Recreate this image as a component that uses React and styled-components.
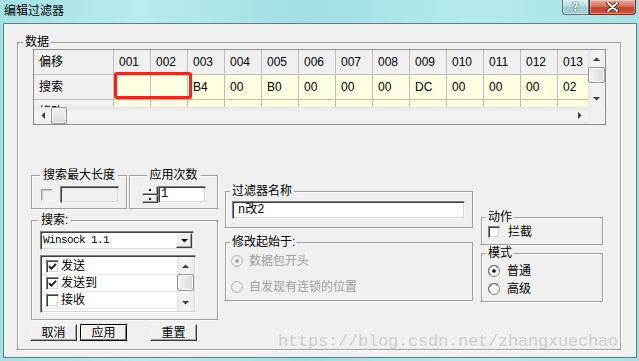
import React from 'react';
import styled, { createGlobalStyle } from 'styled-components';

const UI = `"Liberation Sans", "Noto Sans CJK SC", sans-serif`;
const MONO = `"Liberation Mono", "Noto Sans CJK SC", monospace`;

const GlobalStyle = createGlobalStyle`
  *, *::before, *::after { box-sizing: border-box; }
  html, body { margin: 0; padding: 0; background: #a6e3e6; }
  body { font-family: ${UI}; font-size: 12px; color: #000; }
`;

const Window = styled.div`
  width: 639px;
  height: 361px;
  display: flex;
  flex-direction: column;
  overflow: hidden;
  background: linear-gradient(90deg, #a4e1e4 0%, #b8ecef 22%, #a0dfe2 48%, #b4ebee 74%, #a6e2e5 100%);
`;

const TitleBar = styled.div`
  height: 23px;
  flex-shrink: 0;
  display: flex;
  align-items: flex-start;
`;

const Title = styled.div`
  padding: 4px 0 0 4px;
  font-size: 12px;
  line-height: 14px;
`;

const CapButtons = styled.div`
  margin-left: auto;
  margin-right: 3px;
  display: flex;
`;

const CapButton = styled.div`
  width: ${p => p.$w}px;
  height: 15px;
  display: flex;
  align-items: center;
  justify-content: center;
  border: 1px solid ${p => (p.$close ? '#6b2b21' : '#55777c')};
  border-top: none;
  border-radius: ${p => (p.$close ? '0 0 4px 0' : '0 0 0 4px')};
  background: ${p =>
    p.$close
      ? 'linear-gradient(180deg, #e9a99c 0%, #d8725f 45%, #c3402c 55%, #cb5a44 100%)'
      : 'linear-gradient(180deg, #d3ecef 0%, #b5d9dd 45%, #9cc8cd 55%, #a9d2d6 100%)'};
  box-shadow: inset 0 0 0 1px rgba(255, 255, 255, 0.35);
  color: #fff;
  font-family: "DejaVu Sans", sans-serif;
  font-weight: bold;
  font-size: 12px;
  line-height: 12px;
  text-shadow: 0 0 1px #2c4548, 0 0 1px #2c4548;
`;

const Frame = styled.div`
  flex: 1;
  min-height: 0;
  display: flex;
  padding: 0 2px 3px 3px;
`;

const Client = styled.div`
  flex: 1;
  position: relative;
  display: flex;
  background: #f0f0f0;
  border: 1px solid #607f82;
  padding: 18px 15px 7px 13px;
`;

const Group = styled.div`
  position: relative;
  flex-shrink: 0;
  border: 1px solid #a0a0a0;
  box-shadow: 1px 1px 0 #fff, inset 1px 1px 0 #fff;
  width: ${p => (p.$w ? `${p.$w}px` : 'auto')};
  height: ${p => (p.$h ? `${p.$h}px` : 'auto')};
  margin-top: ${p => p.$mt || 0}px;
  padding: ${p => p.$pad || '0'};
`;

const DataGroup = styled(Group)`
  flex: 1;
`;

const Caption = styled.span`
  position: absolute;
  top: -8px;
  left: ${p => (p.$center ? '50%' : `${p.$left}px`)};
  transform: ${p => (p.$center ? 'translateX(-50%)' : 'none')};
  padding: 0 ${p => p.$pad || 2}px;
  background: #f0f0f0;
  font-size: 12px;
  line-height: 14px;
  white-space: nowrap;
`;

/* ---------- grid ---------- */

const GridFrame = styled.div`
  position: relative;
  width: 573px;
  height: 76px;
  margin-left: 2px;
  border: 1px solid #8e8f8f;
  display: flex;
  flex-direction: column;
  background: #fff;
`;

const GridTop = styled.div`
  flex: 1;
  min-height: 0;
  display: flex;
`;

const Table = styled.div`
  flex: 1;
  overflow: hidden;
`;

const Row = styled.div`
  display: flex;
`;

const Cell = styled.div`
  flex: 0 0 ${p => p.$w}px;
  height: 25px;
  border-right: 1px solid #bdbdbd;
  border-bottom: 1px solid #bdbdbd;
  background: ${p => (p.$head ? '#f0f0f0' : '#ffffe1')};
  padding-left: 5px;
  font-size: 12px;
  line-height: 24px;
  white-space: nowrap;
  overflow: hidden;
`;

const Highlight = styled.div`
  position: absolute;
  left: 80px;
  top: 22px;
  width: 78px;
  height: 27px;
  border: 3px solid #fb2117;
  border-radius: 3px;
  pointer-events: none;
`;

const VBar = styled.div`
  flex: 0 0 17px;
  display: flex;
  flex-direction: column;
  background: linear-gradient(90deg, #e6e6e6 0%, #f3f3f3 30%, #f3f3f3 70%, #ebebeb 100%);
`;

const HBar = styled.div`
  flex: 0 0 17px;
  display: flex;
  background: linear-gradient(180deg, #e6e6e6 0%, #f3f3f3 30%, #f3f3f3 70%, #ebebeb 100%);
`;

const Arrow = styled.div`
  flex: 0 0 17px;
  display: flex;
  align-items: center;
  justify-content: center;
`;

const Track = styled.div`
  flex: 1;
`;

const Thumb = styled.div`
  flex: 0 0 ${p => p.$len}px;
  border: 1px solid #979797;
  border-radius: 2px;
  background: ${p =>
    p.$horizontal
      ? 'linear-gradient(180deg, #f6f6f6 0%, #e6e6e6 50%, #d9d9d9 100%)'
      : 'linear-gradient(90deg, #f6f6f6 0%, #e6e6e6 50%, #d9d9d9 100%)'};
  box-shadow: inset 0 0 0 1px #fdfdfd;
`;

const Corner = styled.div`
  flex: 0 0 17px;
  background: #f0f0f0;
`;

/* ---------- lower controls ---------- */

const Lower = styled.div`
  display: flex;
  align-items: flex-start;
`;

const Column = styled.div`
  flex: 0 0 ${p => p.$w}px;
  display: flex;
  flex-direction: column;
  margin-top: ${p => p.$top}px;
  margin-left: ${p => p.$ml || 0}px;
`;

const PairRow = styled.div`
  display: flex;
  gap: 2px;
`;

const InlineRow = styled.div`
  display: flex;
  align-items: center;
  gap: ${p => p.$gap || 0}px;
`;

const Field = styled.div`
  width: ${p => p.$w}px;
  height: ${p => p.$h || 17}px;
  flex-shrink: 0;
  border: 1px solid;
  border-color: #808080 #fff #fff #808080;
  box-shadow: inset 1px 1px 0 #404040, inset -1px -1px 0 #d8d8d8;
  background: ${p => (p.$disabled ? '#f0f0f0' : '#fff')};
  padding-left: ${p => p.$pl || 2}px;
  font-family: ${MONO};
  font-size: 12px;
  line-height: ${p => (p.$h || 17) - 2}px;
  white-space: nowrap;
`;

const Spin = styled.div`
  width: 16px;
  height: 17px;
  display: flex;
  flex-direction: column;
  flex-shrink: 0;
`;

const SpinHalf = styled.div`
  flex: 1;
  display: flex;
  align-items: center;
  justify-content: center;
  background: #f0f0f0;
  border: 1px solid;
  border-color: #fff #404040 #404040 #fff;
  box-shadow: inset -1px -1px 0 #a0a0a0;
`;

const SpinDot = styled.span`
  width: 2px;
  height: 2px;
  background: #000;
`;

const CheckBox = styled.span`
  width: ${p => p.$size || 12}px;
  height: ${p => p.$size || 12}px;
  flex-shrink: 0;
  display: inline-flex;
  align-items: center;
  justify-content: center;
  border: 1px solid;
  border-color: ${p => (p.$disabled ? '#a0a0a0 #fff #fff #a0a0a0' : '#808080 #fff #fff #808080')};
  box-shadow: ${p => (p.$disabled ? 'inset 1px 1px 0 #c8c8c8' : 'inset 1px 1px 0 #404040, inset -1px -1px 0 #d8d8d8')};
  background: ${p => (p.$disabled ? '#f0f0f0' : '#fff')};
`;

const Combo = styled.div`
  width: 154px;
  height: 19px;
  display: flex;
  padding: 1px;
  border: 1px solid;
  border-color: #808080 #fff #fff #808080;
  box-shadow: inset 1px 1px 0 #404040, inset -1px -1px 0 #d8d8d8;
  background: #fff;
`;

const ComboText = styled.div`
  flex: 1;
  padding-left: 1px;
  font-family: ${MONO};
  font-size: 11px;
  letter-spacing: -0.6px;
  line-height: 15px;
`;

const ComboButton = styled.div`
  flex: 0 0 16px;
  display: flex;
  align-items: center;
  justify-content: center;
  background: #f0f0f0;
  border: 1px solid;
  border-color: #fff #404040 #404040 #fff;
  box-shadow: inset -1px -1px 0 #a0a0a0;
`;

const ListBox = styled.div`
  width: 156px;
  height: 58px;
  margin-top: 5px;
  display: flex;
  border: 1px solid;
  border-color: #808080 #fff #fff #808080;
  box-shadow: inset 1px 1px 0 #404040, inset -1px -1px 0 #d8d8d8;
  background: #fff;
  padding: 1px;
`;

const ListItems = styled.div`
  flex: 1;
  padding-top: 1px;
`;

const ListItem = styled.div`
  height: 17px;
  display: flex;
  align-items: center;
  gap: 2px;
  padding-left: 4px;
  border-bottom: 1px solid #ececec;
  font-size: 12px;
  line-height: 14px;
`;

const ButtonRow = styled.div`
  display: flex;
  margin: 4px 0 0 -1px;
`;

const Button = styled.div`
  width: 47px;
  height: 17px;
  margin-left: ${p => p.$ml || 0}px;
  display: flex;
  align-items: center;
  justify-content: center;
  background: #f0f0f0;
  border: 1px solid;
  border-color: ${p => (p.$default ? '#000' : '#fff #404040 #404040 #fff')};
  box-shadow: ${p =>
    p.$default ? 'inset 1px 1px 0 #fff, inset -1px -1px 0 #808080' : 'inset -1px -1px 0 #a0a0a0'};
  font-size: 12px;
  line-height: 14px;
`;

const OptionRow = styled.div`
  height: ${p => p.$h || 14}px;
  margin-bottom: ${p => p.$mb || 0}px;
  display: flex;
  align-items: center;
  gap: ${p => p.$gap || 6}px;
  font-size: 12px;
  line-height: 14px;
  color: ${p => (p.$disabled ? '#a0a0a0' : '#000')};
`;

const Watermark = styled.div`
  position: absolute;
  left: 274px;
  top: 309px;
  font-family: "Liberation Mono", monospace;
  font-size: 17px;
  line-height: 17px;
  letter-spacing: -0.2px;
  color: #cfcfcf;
  white-space: nowrap;
  pointer-events: none;
`;

/* ---------- small drawings ---------- */

const Tri = ({ dir, color = '#3c3c3c' }) => {
  const vertical = dir === 'up' || dir === 'down';
  const pts = {
    up: '0,4 3.5,0.5 7,4',
    down: '0,0 7,0 3.5,3.5',
    left: '4,0 4,7 0.5,3.5',
    right: '0,0 0,7 3.5,3.5',
  };
  return (
    <svg width={vertical ? 7 : 4} height={vertical ? 4 : 7} viewBox={vertical ? '0 0 7 4' : '0 0 4 7'}>
      <polygon points={pts[dir]} fill={color} />
    </svg>
  );
};

const Tick = () => (
  <svg width="9" height="9" viewBox="0 0 9 9">
    <path d="M1 4.2 L3.3 6.6 L8 1.8" fill="none" stroke="#111" strokeWidth="1.8" />
  </svg>
);

const Radio = ({ checked, disabled }) => (
  <svg width="12" height="12" viewBox="0 0 12 12" style={{ flexShrink: 0 }}>
    <circle cx="6" cy="6" r="5.5" fill={disabled ? '#f0f0f0' : '#fff'} stroke={disabled ? '#b4b4b4' : '#8a8a8a'} />
    <path d="M2.2 9.8 A5 5 0 0 1 9.8 2.2" fill="none" stroke={disabled ? '#c8c8c8' : '#5a5a5a'} strokeWidth="0.8" />
    {checked && <circle cx="6" cy="6" r="1.8" fill={disabled ? '#9a9a9a' : '#000'} />}
  </svg>
);

const CloseGlyph = () => (
  <svg width="13" height="10" viewBox="0 0 13 10">
    <path d="M2 1 L11 9 M11 1 L2 9" stroke="#5b1c12" strokeWidth="4" strokeLinecap="round" />
    <path d="M2 1 L11 9 M11 1 L2 9" stroke="#fff" strokeWidth="2.2" strokeLinecap="round" />
  </svg>
);

/* ---------- data ---------- */

const columns = ['001', '002', '003', '004', '005', '006', '007', '008', '009', '010', '011', '012', '013'];
const searchRow = ['', '', 'B4', '00', 'B0', '00', '00', '00', 'DC', '00', '00', '00', '02'];
const listItems = [
  { label: '发送', checked: true },
  { label: '发送到', checked: true },
  { label: '接收', checked: false },
];

const GridRow = ({ label, values, head }) => (
  <Row>
    <Cell $w={80} $head>{label}</Cell>
    {values.map((v, i) => (
      <Cell key={i} $w={37} $head={head}>{v}</Cell>
    ))}
  </Row>
);

export default function App() {
  return (
    <>
      <GlobalStyle />
      <Window>
        <TitleBar>
          <Title>编辑过滤器</Title>
          <CapButtons>
            <CapButton $w={27}>?</CapButton>
            <CapButton $w={47} $close><CloseGlyph /></CapButton>
          </CapButtons>
        </TitleBar>

        <Frame>
          <Client>
            <DataGroup $pad="6px 0 0 13px">
              <Caption $left={5}>数据</Caption>

              <GridFrame>
                <GridTop>
                  <Table>
                    <GridRow label="偏移" values={columns} head />
                    <GridRow label="搜索" values={searchRow} />
                    <GridRow label="修改" values={columns.map(() => '')} />
                  </Table>
                  <VBar>
                    <Arrow><Tri dir="up" /></Arrow>
                    <Thumb $len={16} />
                    <Track />
                    <Arrow><Tri dir="down" /></Arrow>
                  </VBar>
                </GridTop>
                <HBar>
                  <Arrow><Tri dir="left" /></Arrow>
                  <Thumb $len={16} $horizontal />
                  <Track />
                  <Arrow><Tri dir="right" /></Arrow>
                  <Corner />
                </HBar>
                <Highlight />
              </GridFrame>

              <Lower>
                <Column $w={187} $top={50}>
                  <PairRow>
                    <Group $w={96} $h={34} $pad="10px 0 0 9px">
                      <Caption $center $pad={3}>搜索最大长度</Caption>
                      <InlineRow $gap={7}>
                        <CheckBox $disabled />
                        <Field $w={59} $disabled />
                      </InlineRow>
                    </Group>
                    <Group $w={89} $h={34} $pad="10px 0 0 12px">
                      <Caption $center $pad={3}>应用次数</Caption>
                      <InlineRow>
                        <Spin>
                          <SpinHalf><SpinDot /></SpinHalf>
                          <SpinHalf><SpinDot /></SpinHalf>
                        </Spin>
                        <Field $w={48}>1</Field>
                      </InlineRow>
                    </Group>
                  </PairRow>

                  <Group $h={100} $mt={11} $pad="10px 0 0 8px">
                    <Caption $left={6} $pad={3}>搜索:</Caption>
                    <Combo>
                      <ComboText>Winsock 1.1</ComboText>
                      <ComboButton><Tri dir="down" color="#000" /></ComboButton>
                    </Combo>
                    <ListBox>
                      <ListItems>
                        {listItems.map(item => (
                          <ListItem key={item.label}>
                            <CheckBox $size={13}>{item.checked && <Tick />}</CheckBox>
                            {item.label}
                          </ListItem>
                        ))}
                      </ListItems>
                      <VBar>
                        <Arrow><Tri dir="up" /></Arrow>
                        <Thumb $len={17} />
                        <Track />
                        <Arrow><Tri dir="down" /></Arrow>
                      </VBar>
                    </ListBox>
                  </Group>

                  <ButtonRow>
                    <Button>取消</Button>
                    <Button $ml={3} $default>应用</Button>
                    <Button $ml={23}>重置</Button>
                  </ButtonRow>
                </Column>

                <Column $w={248} $top={66} $ml={7}>
                  <Group $h={37} $pad="9px 0 0 6px">
                    <Caption $left={4}>过滤器名称</Caption>
                    <Field $w={233} $h={18} $pl={5}>n改2</Field>
                  </Group>
                  <Group $h={59} $mt={14} $pad="11px 0 0 5px">
                    <Caption $left={4}>修改起始于:</Caption>
                    <OptionRow $disabled $mb={12}>
                      <Radio checked disabled />
                      数据包开头
                    </OptionRow>
                    <OptionRow $disabled>
                      <Radio disabled />
                      自发现有连锁的位置
                    </OptionRow>
                  </Group>
                </Column>

                <Column $w={122} $top={92} $ml={8}>
                  <Group $h={28} $pad="7px 0 0 6px">
                    <Caption $left={4}>动作</Caption>
                    <OptionRow $gap={8}>
                      <CheckBox />
                      拦截
                    </OptionRow>
                  </Group>
                  <Group $h={49} $mt={8} $pad="10px 0 0 6px">
                    <Caption $left={4}>模式</Caption>
                    <OptionRow $mb={4} $gap={7}>
                      <Radio checked />
                      普通
                    </OptionRow>
                    <OptionRow $gap={7}>
                      <Radio />
                      高级
                    </OptionRow>
                  </Group>
                </Column>
              </Lower>
            </DataGroup>

            <Watermark>https://blog.csdn.net/zhangxuechao</Watermark>
          </Client>
        </Frame>
      </Window>
    </>
  );
}
